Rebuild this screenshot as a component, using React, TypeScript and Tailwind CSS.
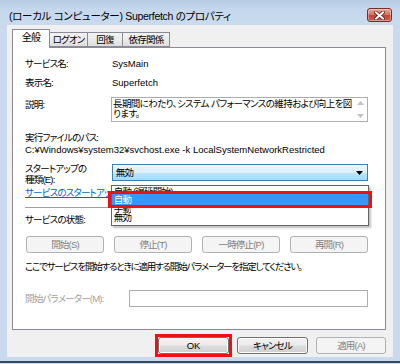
import React from "react";

const btnOn =
  "flex h-[17px] items-center justify-center rounded-[3px] border border-[#707070] bg-[linear-gradient(#f2f2f2,#ebebeb_48%,#dddddd_52%,#cfcfcf)] shadow-[inset_0_0_0_1px_#fbfbfb] text-black";
const btnOff =
  "flex h-[17px] items-center justify-center rounded-[3px] border border-[#adb2b5] bg-[#f4f4f4] text-[#838383]";

function Tab({ label, active, w }: { label: string; active?: boolean; w: string }) {
  if (active) {
    return (
      <div
        className={`relative z-10 -mb-px flex h-[19px] items-start justify-center border border-b-0 border-[#898c95] bg-white pt-[2px] text-[10px] ${w}`}
      >
        {label}
      </div>
    );
  }
  return (
    <div
      className={`flex h-[15px] items-center justify-center border border-l-0 border-[#898c95] bg-[linear-gradient(#f3f3f3,#ebebeb_50%,#dedede)] pt-[1px] ${w}`}
    >
      {label}
    </div>
  );
}

export default function App() {
  return (
    <div className="flex h-[364px] w-[400px] flex-col overflow-hidden bg-[#c9daee] font-['Liberation_Sans','Noto_Sans_CJK_JP',sans-serif] text-[9.5px] leading-[12px] tracking-[-0.8px] text-black [font-feature-settings:'palt']">
      {/* title bar */}
      <div className="flex h-[25px] shrink-0 items-start justify-between bg-[linear-gradient(#b6cbe4,#c4d7ed_35%,#cadbef)] pl-[9px] pr-[8px]">
        <span className="mt-[9px] text-[10.5px] leading-[14px] tracking-[-0.3px]">
          (ローカル コンピューター) Superfetch のプロパティ
        </span>
        <div className="mt-[8px] flex h-[14px] w-[25px] items-center justify-center rounded-[3px] border border-[#7c2c22] bg-[linear-gradient(#e8a99c,#d67464_45%,#c24633_55%,#cc6250)] shadow-[inset_0_0_0_1px_rgba(255,255,255,0.35)]">
          <svg width="11" height="9" viewBox="0 0 11 9">
            <path d="M2 1.5 L9 7.5 M9 1.5 L2 7.5" stroke="#5a1d16" strokeWidth="3.6" strokeLinecap="square" />
            <path d="M2 1.5 L9 7.5 M9 1.5 L2 7.5" stroke="#ffffff" strokeWidth="2" strokeLinecap="square" />
          </svg>
        </div>
      </div>

      {/* body */}
      <div className="mx-[7px] flex h-[332px] shrink-0 flex-col bg-[#f0f0f0] pl-[5px] pr-[7px]">
        {/* tabs */}
        <div className="flex h-[22px] shrink-0 items-end">
          <Tab label="全般" active w="w-[38px]" />
          <Tab label="ログオン" w="w-[38px]" />
          <Tab label="回復" w="w-[35px]" />
          <Tab label="依存関係" w="w-[47px]" />
        </div>

        {/* panel */}
        <div className="flex h-[283px] shrink-0 flex-col border border-[#898c95] bg-white pl-[12px] pr-[17px] pt-[8px]">
          <div className="flex h-[16px] items-center">
            <span className="w-[87px]">サービス名:</span>
            <span className="tracking-normal">SysMain</span>
          </div>
          <div className="mt-[3px] flex h-[16px] items-center">
            <span className="w-[87px]">表示名:</span>
            <span className="tracking-normal">Superfetch</span>
          </div>
          <div className="mt-[6px] flex">
            <span className="w-[86px] pt-[1px] leading-[14px]">説明:</span>
            <div className="flex h-[25px] w-[257px] border border-[#abadb3] bg-white">
              <div className="min-w-0 flex-1 overflow-hidden whitespace-nowrap pl-[1px] pt-[1px] leading-[10px] tracking-[-0.6px]">
                長期間にわたり、システム パフォーマンスの維持および向上を図
                <br />
                ります。
              </div>
              <div className="flex w-[13px] shrink-0 flex-col items-center justify-between py-[3px]">
                <svg width="7" height="4" viewBox="0 0 7 4">
                  <path d="M0 4 L3.5 0 L7 4 Z" fill="#c2c2c2" />
                </svg>
                <svg width="7" height="4" viewBox="0 0 7 4">
                  <path d="M0 0 L3.5 4 L7 0 Z" fill="#c2c2c2" />
                </svg>
              </div>
            </div>
          </div>
          <div className="mt-[10px] h-[12px]">実行ファイルのパス:</div>
          <div className="h-[12px] whitespace-nowrap tracking-normal">
            C:¥Windows¥system32¥svchost.exe -k LocalSystemNetworkRestricted
          </div>

          <div className="mt-[8px] flex">
            <div className="w-[87px] leading-[11px]">
              <div className="-mt-[1px]">スタートアップの</div>
              <div>種類(E):</div>
            </div>
            <div className="relative z-20 w-[257px]">
              <div className="flex h-[17px] items-center justify-between border border-[#3c7fb1] bg-[linear-gradient(#eaf6fd,#d9f0fc_50%,#bee6fd_50%,#a7d9f5)] pl-[3px] pr-[4px]">
                <span>無効</span>
                <svg width="7" height="4" viewBox="0 0 7 4">
                  <path d="M0 0 L7 0 L3.5 4 Z" fill="#000" />
                </svg>
              </div>
              {/* open list */}
              <div className="absolute left-[-1px] top-full h-[41px] w-[258px] border border-[#646464] bg-white shadow-[2px_2px_2px_rgba(0,0,0,0.25)]">
                <div className="absolute left-[2px] top-0 h-[5px] overflow-hidden">
                  <span className="block whitespace-nowrap">自動 (遅延開始)</span>
                </div>
                <div className="absolute left-0 right-0 top-[7px] flex h-[13px] items-center bg-[#3399ff] pl-[2px] text-white">
                  自動
                </div>
                <div className="absolute left-[2px] top-[22px] h-[5px] overflow-hidden">
                  <span className="-mt-[5px] block">手動</span>
                </div>
                <span className="absolute left-[2px] top-[26px]">無効</span>
                <div className="absolute left-[-4px] top-[5px] h-[17px] w-[264px] border-[3px] border-[#ee1111]" />
              </div>
            </div>
          </div>

          <div className="mt-[2px] h-[12px] w-[83px] overflow-hidden whitespace-nowrap text-[#0066cc] underline">
            サービスのスタートアップ オプションの構成についてのヘルプを表示します。
          </div>
          <div className="mt-[8px] h-px w-[343px] bg-[#a0a0a0]" />
          <div className="mt-[6px] flex h-[12px] items-center">
            <span className="w-[87px]">サービスの状態:</span>
            <div className="mt-[5px] h-[7px] overflow-hidden">
              <span className="-mt-[5px] block">停止</span>
            </div>
          </div>

          <div className="ml-[1px] mt-[10px] flex gap-[10px]">
            <div className={`w-[78px] ${btnOff}`}>開始(S)</div>
            <div className={`w-[78px] ${btnOff}`}>停止(T)</div>
            <div className={`w-[78px] ${btnOff}`}>一時停止(P)</div>
            <div className={`w-[78px] ${btnOff}`}>再開(R)</div>
          </div>

          <div className="mt-[8px] h-[12px] whitespace-nowrap tracking-[-1.2px]">
            ここでサービスを開始するときに適用する開始パラメーターを指定してください。
          </div>

          <div className="mt-[17px] flex items-center">
            <span className="w-[104px] text-[#a0a0a0]">開始パラメーター(M):</span>
            <div className="h-[17px] w-[239px] border border-[#abadb3] bg-white" />
          </div>
        </div>

        {/* bottom buttons */}
        <div className="flex justify-end gap-[8px] pt-[7px]">
          <div className="w-[71px] outline-[3px] outline-solid outline-[#ee1111]">
            <div className={`${btnOn} border-[#3c7fb1] shadow-[inset_0_0_0_1px_#48d7fb] tracking-normal`}>OK</div>
          </div>
          <div className={`w-[71px] ${btnOn}`}>キャンセル</div>
          <div className={`w-[70px] ${btnOff}`}>適用(A)</div>
        </div>
      </div>

      {/* bottom frame */}
      <div className="h-[4px] shrink-0" />
      <div className="h-[2px] shrink-0 bg-[#34495f]" />
    </div>
  );
}
